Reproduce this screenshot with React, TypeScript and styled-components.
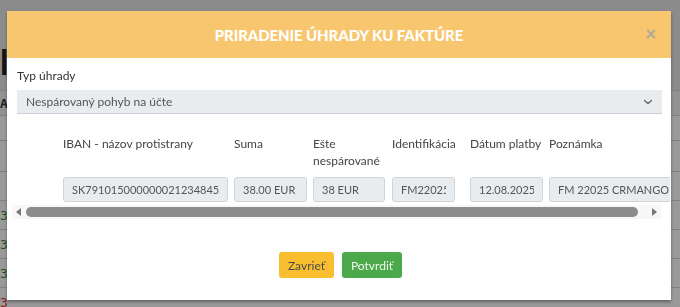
import styled, { createGlobalStyle } from "styled-components";

const GlobalStyle = createGlobalStyle`
  html, body {
    margin: 0;
    padding: 0;
    width: 680px;
    height: 307px;
    overflow: hidden;
    font-family: "Lato", "Liberation Sans", sans-serif;
  }
`;

const Page = styled.div`
  width: 680px;
  height: 307px;
  background: #ffffff;
  overflow: hidden;
`;

const TopArea = styled.div`
  height: 90px;
  background: #e8e8e8;
  display: flex;
  align-items: flex-end;
`;

const PageTitle = styled.h1`
  margin: 0 0 8px 0;
  font-size: 34px;
  font-weight: 700;
  color: #222;
  letter-spacing: 1px;
`;

const BgRow = styled.div<{ $head?: boolean; $h: number }>`
  height: ${p => p.$h}px;
  display: flex;
  align-items: center;
  border-top: 1px solid #d6d6d6;
  background: ${p => (p.$head ? "#f4f4f4" : "#fff")};
  font-size: 13px;
`;

const BgCell = styled.span<{ $tone?: "green" | "red" | "head" }>`
  font-family: "DejaVu Sans Mono", monospace;
  color: ${p =>
    p.$tone === "green" ? "#2e8b2e" : p.$tone === "red" ? "#d33" : "#333"};
  font-weight: ${p => (p.$tone === "head" ? 700 : 400)};
  margin-left: 0;
`;

const Overlay = styled.div`
  position: fixed;
  inset: 0;
  background: rgba(0, 0, 0, 0.4);
`;

const Modal = styled.div`
  position: fixed;
  top: 11px;
  left: 7px;
  width: 664px;
  height: 289px;
  background: #fff;
  box-shadow: 0 2px 3px rgba(0, 0, 0, 0.35);
  display: flex;
  flex-direction: column;
`;

const ModalHeader = styled.div`
  height: 47px;
  flex-shrink: 0;
  background: #f7c66f;
  display: flex;
  align-items: center;
  justify-content: center;
  position: relative;
`;

const ModalTitle = styled.h2`
  margin: 0;
  font-size: 15px;
  font-weight: 900;
  color: #fff;
  letter-spacing: -0.1px;
`;

const CloseButton = styled.button`
  position: absolute;
  right: 14px;
  top: 13px;
  border: none;
  background: none;
  padding: 0;
  font-size: 15px;
  font-weight: 700;
  line-height: 20px;
  color: #b0a898;
  cursor: pointer;
  font-family: "DejaVu Sans", sans-serif;
`;

const ModalBody = styled.div`
  flex: 1;
  padding: 10px 9px 0 10px;
  display: flex;
  flex-direction: column;
`;

const FieldLabel = styled.label`
  font-size: 12px;
  line-height: 16px;
  color: #333;
  margin-bottom: 6px;
`;

const SelectBox = styled.div`
  height: 23px;
  background: #e9ecef;
  border-bottom: 1px solid #c9ced8;
  display: flex;
  align-items: center;
  justify-content: space-between;
  padding: 0 9px;
  font-size: 12px;
  color: #555;
`;

const Chevron = styled.svg`
  width: 10px;
  height: 10px;
  color: #666;
`;

const TableScroll = styled.div`
  margin-top: 21px;
  margin-right: -8px;
  overflow: hidden;
`;

const TableGrid = styled.div`
  display: flex;
  padding-left: 46px;
  width: max-content;
`;

const Column = styled.div<{ $width: number }>`
  width: ${p => p.$width}px;
  flex-shrink: 0;
  display: flex;
  flex-direction: column;
`;

const HeadLabel = styled.div`
  height: 34px;
  margin-bottom: 8px;
  font-size: 12px;
  line-height: 17px;
  color: #444;
`;

const CellInput = styled.input<{ $width: number }>`
  box-sizing: border-box;
  width: ${p => p.$width}px;
  height: 25px;
  border: 1px solid #cfd4d9;
  border-radius: 3px;
  background: #e9ecef;
  padding: 0 8px;
  font-family: "Lato", "Liberation Sans", sans-serif;
  font-size: 11px;
  color: #555;
  outline: none;
`;

const ScrollTrack = styled.div`
  margin-top: 3px;
  height: 14px;
  margin-left: -5px;
  margin-right: 1px;
  background: #f7f7f7;
  display: flex;
  align-items: center;
  gap: 5px;
  padding: 0 4px;
`;

const Arrow = styled.span<{ $dir: "left" | "right" }>`
  width: 0;
  height: 0;
  border-top: 4px solid transparent;
  border-bottom: 4px solid transparent;
  ${p =>
    p.$dir === "left"
      ? "border-right: 5px solid #777;"
      : "border-left: 5px solid #777;"}
`;

const Thumb = styled.div`
  flex: 1;
  height: 10px;
  border-radius: 5px;
  background: #8c8c8c;
  margin-right: 9px;
`;

const Footer = styled.div`
  margin-top: 33px;
  display: flex;
  justify-content: center;
  gap: 8px;
  padding-left: 2px;
`;

const ActionButton = styled.button<{ $variant: "warning" | "success" }>`
  height: 26px;
  padding: 0 9px;
  border: none;
  border-radius: 3px;
  font-family: "Lato", "Liberation Sans", sans-serif;
  font-size: 12px;
  background: ${p => (p.$variant === "warning" ? "#f8be30" : "#4ba84b")};
  color: ${p => (p.$variant === "warning" ? "#4a4a4a" : "#eef8ee")};
  cursor: pointer;
`;

const columns = [
  {
    label: "IBAN - názov protistrany",
    value: "SK7910150000000212348458 - CRMANGO s.r.o.",
    width: 171,
    inputWidth: 165,
  },
  { label: "Suma", value: "38.00 EUR", width: 79, inputWidth: 73 },
  { label: "Ešte nespárované", value: "38 EUR", width: 79, inputWidth: 72 },
  { label: "Identifikácia", value: "FM22025 0012", width: 78, inputWidth: 63 },
  { label: "Dátum platby", value: "12.08.2025", width: 79, inputWidth: 73 },
  {
    label: "Poznámka",
    value: "FM 22025 CRMANGO SRO",
    width: 140,
    inputWidth: 140,
  },
];

const bgRows: { h: number; text: string; tone?: "green" | "red" | "head" }[] = [
  { h: 24, text: "A", tone: "head" },
  { h: 24, text: "" },
  { h: 30, text: "" },
  { h: 28, text: "" },
  { h: 28, text: "3", tone: "green" },
  { h: 28, text: "3", tone: "green" },
  { h: 28, text: "3", tone: "green" },
  { h: 28, text: "3", tone: "red" },
];

export default function App() {
  return (
    <>
      <GlobalStyle />
      <Page>
        <TopArea>
          <PageTitle>ll</PageTitle>
        </TopArea>
        {bgRows.map((row, i) => (
          <BgRow key={i} $h={row.h} $head={row.tone === "head"}>
            <BgCell $tone={row.tone}>{row.text}</BgCell>
          </BgRow>
        ))}
      </Page>
      <Overlay />
      <Modal>
        <ModalHeader>
          <ModalTitle>PRIRADENIE ÚHRADY KU FAKTÚRE</ModalTitle>
          <CloseButton aria-label="Zavrieť">×</CloseButton>
        </ModalHeader>
        <ModalBody>
          <FieldLabel>Typ úhrady</FieldLabel>
          <SelectBox>
            <span>Nespárovaný pohyb na účte</span>
            <Chevron viewBox="0 0 10 10" fill="none">
              <path
                d="M1.5 3.5 L5 6.5 L8.5 3.5"
                stroke="currentColor"
                strokeWidth="1.4"
                strokeLinecap="round"
              />
            </Chevron>
          </SelectBox>
          <TableScroll>
            <TableGrid>
              {columns.map(col => (
                <Column key={col.label} $width={col.width}>
                  <HeadLabel>{col.label}</HeadLabel>
                  <CellInput $width={col.inputWidth} value={col.value} readOnly />
                </Column>
              ))}
            </TableGrid>
          </TableScroll>
          <ScrollTrack>
            <Arrow $dir="left" />
            <Thumb />
            <Arrow $dir="right" />
          </ScrollTrack>
          <Footer>
            <ActionButton $variant="warning">Zavrieť</ActionButton>
            <ActionButton $variant="success">Potvrdiť</ActionButton>
          </Footer>
        </ModalBody>
      </Modal>
    </>
  );
}
